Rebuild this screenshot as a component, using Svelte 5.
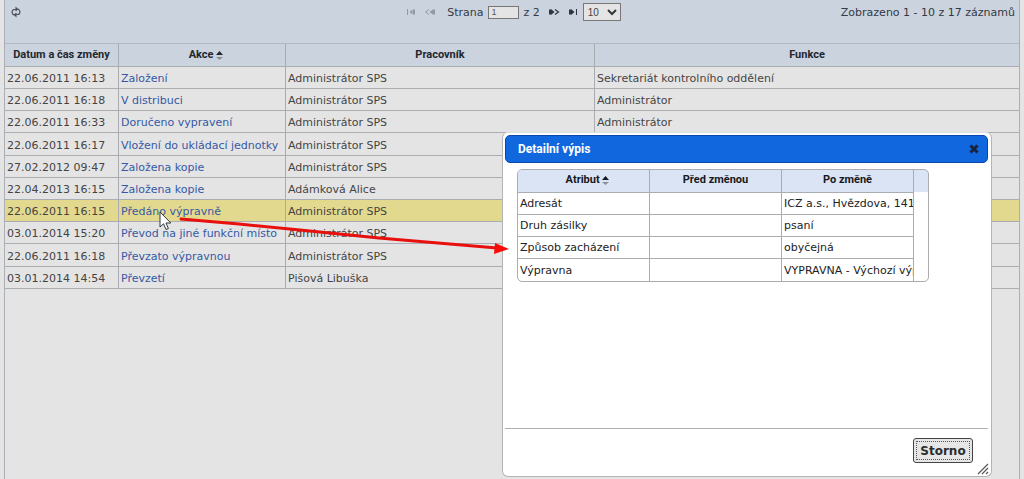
<script>
	let rows = [
		{ date: '22.06.2011 16:13', action: 'Založení', worker: 'Administrátor SPS', role: 'Sekretariát kontrolního oddělení' },
		{ date: '22.06.2011 16:18', action: 'V distribuci', worker: 'Administrátor SPS', role: 'Administrátor' },
		{ date: '22.06.2011 16:33', action: 'Doručeno vypravení', worker: 'Administrátor SPS', role: 'Administrátor' },
		{ date: '22.06.2011 16:17', action: 'Vložení do ukládací jednotky', worker: 'Administrátor SPS', role: '' },
		{ date: '27.02.2012 09:47', action: 'Založena kopie', worker: 'Administrátor SPS', role: '' },
		{ date: '22.04.2013 16:15', action: 'Založena kopie', worker: 'Adámková Alice', role: '' },
		{ date: '22.06.2011 16:15', action: 'Předáno výpravně', worker: 'Administrátor SPS', role: '' },
		{ date: '03.01.2014 15:20', action: 'Převod na jiné funkční místo', worker: 'Administrátor SPS', role: '' },
		{ date: '22.06.2011 16:18', action: 'Převzato výpravnou', worker: 'Administrátor SPS', role: '' },
		{ date: '03.01.2014 14:54', action: 'Převzetí', worker: 'Pišová Libuška', role: '' }
	];

	let details = [
		{ name: 'Adresát', before: '', after: 'ICZ a.s., Hvězdova, 1415' },
		{ name: 'Druh zásilky', before: '', after: 'psaní' },
		{ name: 'Způsob zacházení', before: '', after: 'obyčejná' },
		{ name: 'Výpravna', before: '', after: 'VYPRAVNA - Výchozí výp' }
	];

	let page = '1';
	let pageSize = '10';
	let selected = 6;
	let open = true;

	function showDetail(index) {
		selected = index;
		open = true;
	}

	function close() {
		open = false;
	}
</script>

<main>
	<div class="grid">
		<div class="pager">
			<button class="icon refresh" aria-label="Obnovit">
				<svg width="12" height="12" viewBox="0 0 12 12" fill="none" stroke="#4a505b" stroke-width="1.2">
					<path d="M4 9A2.7 3 0 0 1 3.5 3.5H6M8 3A2.7 3 0 0 1 8.5 8.5H6" />
					<path d="M5.5 0.5L8.5 3.2L5.5 5.5zM6.5 6.5L3.5 8.8L6.5 11.5z" fill="#4a505b" stroke="none" />
				</svg>
			</button>
			<div class="pages">
				<button class="icon" disabled aria-label="První strana">
					<svg width="10" height="8" viewBox="0 0 10 8" fill="#3c4452"><path d="M1 1h1v6H1zM6.5 1.5v5L3.5 4zM7 1.5h2v5H7z" /></svg>
				</button>
				<button class="icon" disabled aria-label="Předchozí strana">
					<svg width="12" height="8" viewBox="0 0 12 8"><path d="M5 1.5L1.5 4L5 6.5" fill="none" stroke="#3c4452" /><path d="M9 1.5v5L5.5 4zM9 1.5h2v5H9z" fill="#3c4452" /></svg>
				</button>
				<label for="page">Strana</label>
				<input id="page" type="text" bind:value={page}>
				<span class="total">z 2</span>
				<button class="icon" aria-label="Další strana">
					<svg width="12" height="8" viewBox="0 0 12 8"><path d="M1 1.5h2v5H1zM3 1l3.5 3L3 7z" fill="#2e3440" /><path d="M7 1.5L10.5 4L7 6.5" fill="none" stroke="#2e3440" stroke-width="1.2" /></svg>
				</button>
				<button class="icon" aria-label="Poslední strana">
					<svg width="10" height="8" viewBox="0 0 10 8" fill="#2e3440"><path d="M1 1.5h2v5H1zM3 1l3.5 3L3 7zM8 1h1v6H8z" /></svg>
				</button>
				<span class="size">
					<select bind:value={pageSize} aria-label="Počet záznamů">
						<option>10</option>
						<option>20</option>
						<option>50</option>
					</select>
					<svg width="10" height="7" viewBox="0 0 10 7" fill="none" stroke="#33373d" stroke-width="2"><path d="M1 1l4 4l4-4" /></svg>
				</span>
			</div>
			<span class="info">Zobrazeno 1 - 10 z 17 záznamů</span>
		</div>

		<table class="history">
			<colgroup>
				<col class="c-date">
				<col class="c-action">
				<col class="c-worker">
				<col>
			</colgroup>
			<thead>
				<tr>
					<th>Datum a čas změny</th>
					<th class="sorted">
						Akce
						<svg width="7" height="9" viewBox="0 0 7 9"><path d="M3.5 0L7 4H0z" fill="#23272e" /><path d="M0 6h7L3.5 9z" fill="#8b9097" /></svg>
					</th>
					<th>Pracovník</th>
					<th>Funkce</th>
				</tr>
			</thead>
			<tbody>
				{#each rows as row, i}
					<tr class:selected={selected === i}>
						<td>{row.date}</td>
						<td><a href="#detail" on:click|preventDefault={() => showDetail(i)}>{row.action}</a></td>
						<td>{row.worker}</td>
						<td>{row.role}</td>
					</tr>
				{/each}
			</tbody>
		</table>
	</div>

	{#if open}
		<div class="dialog" role="dialog" aria-labelledby="dialog-title">
			<div class="titlebar">
				<h2 id="dialog-title">Detailní výpis</h2>
				<button class="icon" aria-label="Zavřít" on:click={close}>
					<svg width="10" height="10" viewBox="0 0 10 10" stroke="#16233a" stroke-width="3"><path d="M1.5 1.5l7 7M8.5 1.5l-7 7" /></svg>
				</button>
			</div>
			<div class="content">
				<div class="frame">
					<table class="detail">
						<thead>
							<tr>
								<th class="sorted">
									Atribut
									<svg width="7" height="9" viewBox="0 0 7 9"><path d="M3.5 0L7 4H0z" fill="#16191e" /><path d="M0 6h7L3.5 9z" fill="#8b9097" /></svg>
								</th>
								<th>Před změnou</th>
								<th>Po změně</th>
							</tr>
						</thead>
						<tbody>
							{#each details as item}
								<tr>
									<td>{item.name}</td>
									<td>{item.before}</td>
									<td>{item.after}</td>
								</tr>
							{/each}
						</tbody>
					</table>
				</div>
			</div>
			<div class="buttons">
				<button class="storno" on:click={close}>Storno</button>
			</div>
			<svg class="resize" width="12" height="12" viewBox="0 0 12 12" stroke="#55585c" stroke-width="1.2"><path d="M1 11L11 1M5 11l6-6M9 11l2-2" /></svg>
		</div>
	{/if}

	<svg class="arrow" width="330" height="40" viewBox="0 0 330 40">
		<path d="M2 4L60 9L121 15L200 23L318 33" fill="none" stroke="#e8100c" stroke-width="3" stroke-linecap="round" />
		<path d="M316 28L330 34L315 39z" fill="#f80c08" />
	</svg>
	<svg class="cursor" width="13" height="20" viewBox="0 0 13 20">
		<path d="M1 1v15l3.5-3.2L7 18.5l2.4-1L7 12h4.8z" fill="#fff" stroke="#33363c" />
	</svg>
</main>

<style>
	:global(body) {
		margin: 0;
		background: #e4e4e4;
	}

	main {
		position: relative;
		box-sizing: border-box;
		min-height: 100vh;
		padding: 0 4px;
		display: flex;
		overflow: hidden;
		font-family: Verdana, "DejaVu Sans", sans-serif;
		font-size: 11px;
		color: #444;
	}

	.grid {
		flex: 1;
		border-left: 1px solid #aaafb5;
		border-right: 1px solid #aaafb5;
	}

	.icon {
		display: flex;
		padding: 0;
		border: 0;
		background: none;
		cursor: pointer;
	}

	.icon:disabled {
		opacity: 0.4;
	}

	.pager {
		display: grid;
		grid-template-columns: 1fr auto 1fr;
		align-items: start;
		height: 43px;
		background: #cbd3df;
		color: #333a45;
	}

	.refresh {
		padding: 6px 5px;
	}

	.pages {
		display: flex;
		align-items: center;
		height: 24px;
		gap: 8px;
		padding-left: 3px;
	}

	.pages label {
		margin-left: 3px;
	}

	.pages input {
		box-sizing: border-box;
		width: 31px;
		height: 13px;
		margin: 0 -3px 0 -4px;
		padding: 0 3px;
		border: 1px solid #777;
		background: #e4e4e4;
		font: 9px "Liberation Sans", Arial, sans-serif;
		color: #555;
	}

	.size {
		position: relative;
		display: flex;
		margin-left: -3px;
	}

	.size select {
		appearance: none;
		width: 38px;
		height: 18px;
		padding: 0 4px;
		border: 1px solid #777;
		border-radius: 0;
		background: #e4e4e4;
		font: 10px "Liberation Sans", Arial, sans-serif;
		color: #444;
	}

	.size svg {
		position: absolute;
		right: 4px;
		top: 6px;
		pointer-events: none;
	}

	.info {
		padding: 6px 4px 0 0;
		text-align: right;
	}

	table {
		width: 100%;
		table-layout: fixed;
		border-collapse: separate;
		border-spacing: 0;
	}

	th, td {
		box-sizing: border-box;
		height: 22px;
		padding: 0 2px;
		border-right: 1px solid #a9adb1;
		border-bottom: 1px solid #a9adb1;
		white-space: nowrap;
		overflow: hidden;
		text-align: left;
	}

	th {
		height: 23px;
		padding-bottom: 4px;
		text-align: center;
		font: bold 11px Roboto, Arial, sans-serif;
		color: #23272e;
	}

	.sorted {
		padding-left: 10px;
	}

	.sorted svg {
		vertical-align: -2px;
	}

	.history th {
		height: 24px;
		padding-bottom: 2px;
		border-top: 1px solid #b2b8c1;
		background: #cbd3df;
	}

	.history td {
		padding-top: 2px;
	}

	.history th:last-child, .history td:last-child {
		border-right: 0;
	}

	/* every fifth row is one pixel taller */
	.history tr:nth-child(5n - 1) td {
		height: 23px;
	}

	.c-date {
		width: 114px;
	}

	.c-action {
		width: 167px;
	}

	.c-worker {
		width: 309px;
	}

	.selected td {
		background: #e3d98e;
	}

	a {
		color: #3559a5;
		text-decoration: none;
	}

	.dialog {
		position: absolute;
		top: 132px;
		right: 32px;
		box-sizing: border-box;
		width: 490px;
		height: 345px;
		padding: 2px 3px 2px 2px;
		display: flex;
		flex-direction: column;
		border: 1px solid #b4b4b4;
		border-top-color: #ddd;
		border-radius: 6px;
		background: #fff;
		color: #222;
	}

	.titlebar {
		display: flex;
		align-items: center;
		justify-content: space-between;
		box-sizing: border-box;
		height: 28px;
		padding: 0 8px 0 12px;
		border: 1px solid #0b48ad;
		border-radius: 5px;
		background: #1067de;
	}

	h2 {
		margin: 0;
		font: bold 12px Roboto, Arial, sans-serif;
		color: #fff;
	}

	.content {
		flex: 1;
		padding: 6px 12px;
	}

	.frame {
		box-sizing: border-box;
		width: 412px;
		border: 1px solid #a9adb1;
		border-radius: 5px;
		overflow: hidden;
		background: linear-gradient(#dae4f4 22px, #fff 22px);
	}

	.detail {
		width: 396px;
	}

	.detail th {
		background: #dae4f4;
		color: #16191e;
	}

	.detail tr:last-child td {
		border-bottom: 0;
	}

	.buttons {
		display: flex;
		justify-content: flex-end;
		padding: 9px 15px 11px;
		border-top: 1px solid #b0b0b0;
	}

	.storno {
		height: 25px;
		width: 60px;
		padding: 0;
		border: 1px solid #444;
		border-radius: 3px;
		outline: 1px dotted #555;
		outline-offset: -4px;
		background: #e6e6e6;
		font: bold 12px Verdana, "DejaVu Sans", sans-serif;
		color: #2c2c2c;
	}

	.resize {
		position: absolute;
		right: 2px;
		bottom: 1px;
	}

	.arrow {
		position: absolute;
		left: 179px;
		top: 215px;
		pointer-events: none;
	}

	.cursor {
		position: absolute;
		left: 159px;
		top: 211px;
		pointer-events: none;
	}
</style>
